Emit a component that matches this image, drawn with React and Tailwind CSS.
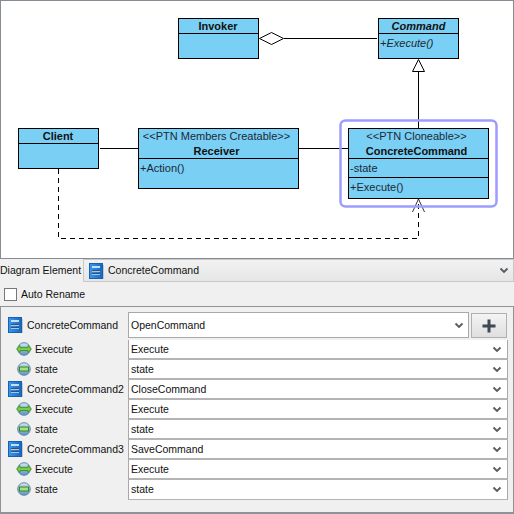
const Chevron = () => (
  <svg width="10" height="7" viewBox="0 0 10 7" className="shrink-0">
    <path d="M1.5 1.5 L5 5 L8.5 1.5" fill="none" stroke="#555b60" strokeWidth="1.8" />
  </svg>
);

const ClassIcon = () => (
  <svg width="15" height="16" viewBox="0 0 15 16" className="shrink-0">
    <defs>
      <linearGradient id="cg" x1="0" y1="0" x2="1" y2="0">
        <stop offset="0" stopColor="#3a97ee" />
        <stop offset="1" stopColor="#1766c4" />
      </linearGradient>
    </defs>
    <rect x="0.5" y="0.5" width="13" height="15" fill="url(#cg)" stroke="#1d5fa8" />
    <rect x="14" y="2" width="1" height="14" fill="#c4c8cc" />
    <rect x="3" y="3" width="8" height="2" fill="#bfe0f8" />
    <rect x="3" y="7" width="8" height="1" fill="#3f4f66" />
    <rect x="3" y="8" width="8" height="1" fill="#9ccbf2" />
    <rect x="3" y="10" width="8" height="1" fill="#3f4f66" />
    <rect x="3" y="11" width="8" height="1" fill="#9ccbf2" />
  </svg>
);

const OpIcon = () => (
  <svg width="16" height="14" viewBox="0 0 16 14" className="shrink-0">
    <defs>
      <linearGradient id="bg1" x1="0" y1="0" x2="0" y2="1">
        <stop offset="0" stopColor="#d4e4f2" />
        <stop offset="1" stopColor="#5d93c6" />
      </linearGradient>
    </defs>
    <circle cx="8" cy="7" r="6.3" fill="url(#bg1)" stroke="#5f86ab" />
    <path d="M0.5 7 L4 3.6 V5.4 H12 V3.6 L15.5 7 L12 10.4 V8.6 H4 V10.4 Z" fill="#7ccb44" stroke="#2f8a1c" strokeWidth="0.8" />
  </svg>
);

const AttrIcon = () => (
  <svg width="14" height="14" viewBox="0 0 14 14" className="shrink-0">
    <defs>
      <linearGradient id="bg2" x1="0" y1="0" x2="0" y2="1">
        <stop offset="0" stopColor="#d4e4f2" />
        <stop offset="1" stopColor="#5d93c6" />
      </linearGradient>
    </defs>
    <circle cx="7" cy="7" r="6.3" fill="url(#bg2)" stroke="#5f86ab" />
    <rect x="2.5" y="5" width="9" height="4" fill="#a8e080" stroke="#2f8a1c" />
  </svg>
);

const Sep = () => <div className="h-px bg-black" />;

function UmlBox({ className, children }) {
  return (
    <div className={`absolute flex flex-col border border-black bg-[#7acff5] text-[11px] leading-[15px] text-[#111] ${className}`}>
      {children}
    </div>
  );
}

const Title = ({ stereo, name, italic, h, pad = "pr-[2px]" }) => (
  <div className={`flex flex-col items-center justify-center ${h} ${pad}`}>
    {stereo && <div className="whitespace-nowrap text-[#1a2a35]">{stereo}</div>}
    <div className={`whitespace-nowrap font-bold ${italic ? "italic" : ""}`}>{name}</div>
  </div>
);

const Member = ({ children, h, italic }) => (
  <div className={`whitespace-nowrap pl-[1px] ${h} ${italic ? "italic" : ""} text-[#1a2a35]`}>{children}</div>
);

function Diagram() {
  return (
    <div className="relative h-[259px] shrink-0 border border-[#868b94] bg-white">
      <svg className="absolute left-[-1px] top-[-1px]" width="514" height="259" viewBox="0 0 514 259" fill="none">
        <path d="M284 38.5 H377" stroke="#000" />
        <path d="M259.5 38.5 L271.5 32.5 L283.5 38.5 L271.5 44.5 Z" fill="#fff" stroke="#000" />
        <path d="M418.5 71 V128" stroke="#000" />
        <path d="M418.5 59.5 L412.5 71.5 H424.5 Z" fill="#fff" stroke="#000" />
        <path d="M100 148.5 H138" stroke="#000" />
        <path d="M299 148.5 H348" stroke="#000" />
        <path d="M58.5 169 V238.5 H418.5 V199" stroke="#000" strokeDasharray="5 4" />
        <path d="M412.5 212 L418.5 199 L424.5 212" stroke="#333" />
        <rect x="340.5" y="120.5" width="156" height="86" rx="5" stroke="#9c9cff" strokeWidth="2.5" />
      </svg>

      <UmlBox className="left-[177px] top-[17px] h-[41px] w-[81px]">
        <Title name="Invoker" h="h-[14px]" pad="pr-[1px]" />
        <Sep />
      </UmlBox>

      <UmlBox className="left-[377px] top-[17px] h-[41px] w-[81px]">
        <Title name="Command" italic h="h-[14px]" pad="pr-0" />
        <Sep />
        <Member h="h-[24px] pt-[2px]" italic>+Execute()</Member>
      </UmlBox>

      <UmlBox className="left-[17px] top-[127px] h-[41px] w-[81px]">
        <Title name="Client" h="h-[14px]" pad="pr-[1px]" />
        <Sep />
      </UmlBox>

      <UmlBox className="left-[137px] top-[127px] h-[61px] w-[161px]">
        <Title stereo="<<PTN Members Creatable>>" name="Receiver" h="h-[29px]" pad="pr-[4px]" />
        <Sep />
        <Member h="h-[29px] pt-[2px]">+Action()</Member>
      </UmlBox>

      <UmlBox className="left-[347px] top-[127px] h-[71px] w-[141px]">
        <Title stereo="<<PTN Cloneable>>" name="ConcreteCommand" h="h-[29px]" pad="pr-[4px]" />
        <Sep />
        <Member h="h-[18px] pt-[2px]">-state</Member>
        <Sep />
        <Member h="h-[20px] pt-[2px]">+Execute()</Member>
      </UmlBox>
    </div>
  );
}

const Label = ({ icon, text, indent, h = "h-[20px] pb-[2px]" }) => (
  <div className={`flex items-center whitespace-nowrap ${h} ${indent}`}>
    {icon}
    <span className="pt-[2px]">{text}</span>
  </div>
);

function Row({ label, value, last }) {
  return (
    <div className="grid h-[20px] grid-cols-[127px_380px]">
      {label}
      <div className={`flex items-center justify-between border-x border-[#a8a8a8] border-b-[#b4b4b4] bg-white pl-[2px] pr-[5px] ${last ? "border-b pb-px" : "border-b-2"}`}>
        <span className="whitespace-nowrap pt-[2px]">{value}</span>
        <Chevron />
      </div>
    </div>
  );
}

const ClassRow = ({ name, value }) => (
  <Row value={value} label={<Label icon={<ClassIcon />} text={name} indent="gap-[4px] pl-[7px]" />} />
);
const OpRow = () => (
  <Row value="Execute" label={<Label icon={<OpIcon />} text="Execute" indent="gap-[3px] pl-[15px]" />} />
);
const AttrRow = ({ last }) => (
  <Row last={last} value="state" label={<Label icon={<AttrIcon />} text="state" indent="gap-[4px] pl-[16px]" />} />
);

export default function App() {
  return (
    <div className="flex h-[514px] w-[514px] flex-col overflow-hidden bg-[#f0f0f0] font-['Liberation_Sans',sans-serif] text-[10.5px] text-[#111]">
      <Diagram />

      <div className="flex h-[23px] shrink-0">
        <div className="flex w-[83px] shrink-0 items-center whitespace-nowrap">Diagram Element</div>
        <div className="flex flex-1 items-center border border-[#c8c8c8] bg-gradient-to-b from-[#f2f2f2] to-[#e6e6e6] pl-[5px] pr-[4px]">
          <ClassIcon />
          <span className="ml-[4px] flex-1 whitespace-nowrap">ConcreteCommand</span>
          <Chevron />
        </div>
      </div>

      <div className="flex h-[24px] shrink-0 items-center gap-[4px] pl-[4px]">
        <div className="h-[13px] w-[13px] border border-[#777] bg-white" />
        <span className="pt-[2px]">Auto Rename</span>
      </div>

      <div className="flex-1 border border-b-2 border-[#8f9399] pt-[5px]">
        <div className="grid h-[28px] grid-cols-[127px_341px_39px]">
          <Label icon={<ClassIcon />} text="ConcreteCommand" indent="gap-[4px] pl-[7px]" h="h-[26px]" />
          <div className="flex h-[26px] items-center justify-between border border-[#a8a8a8] bg-white pl-[2px] pr-[4px]">
            <span className="pt-[2px]">OpenCommand</span>
            <Chevron />
          </div>
          <div className="ml-[2px] mr-[1px] mt-px flex h-[25px] items-center justify-center border border-[#b0b0b0] bg-gradient-to-b from-[#f4f4f4] to-[#dfdfdf]">
            <svg width="14" height="14" viewBox="0 0 14 14">
              <path d="M5.5 0.5 H8.5 V5.5 H13.5 V8.5 H8.5 V13.5 H5.5 V8.5 H0.5 V5.5 H5.5 Z" fill="#3e4753" />
            </svg>
          </div>
        </div>
        <OpRow />
        <AttrRow />
        <ClassRow name="ConcreteCommand2" value="CloseCommand" />
        <OpRow />
        <AttrRow />
        <ClassRow name="ConcreteCommand3" value="SaveCommand" />
        <OpRow />
        <AttrRow last />
      </div>
    </div>
  );
}
